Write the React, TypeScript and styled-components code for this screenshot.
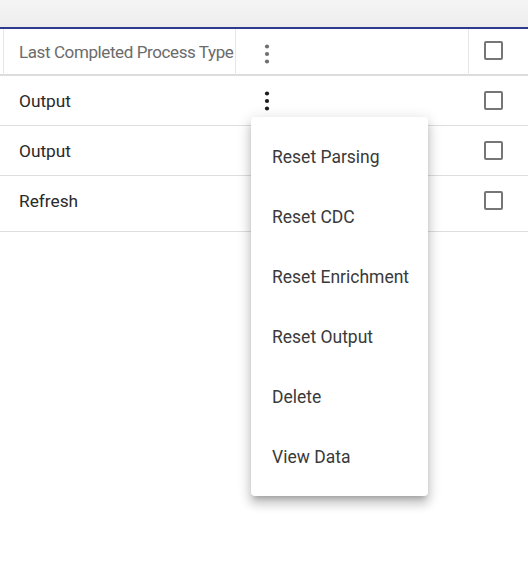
import React from "react";
import styled, { createGlobalStyle } from "styled-components";

const GlobalStyle = createGlobalStyle`
  html, body {
    margin: 0;
    padding: 0;
    background: #ffffff;
  }
  body {
    font-family: Roboto, "Liberation Sans", Arial, sans-serif;
  }
`;

const Page = styled.div`
  position: relative;
  width: 528px;
  height: 564px;
  overflow: hidden;
  background: #ffffff;
  font-family: Roboto, "Liberation Sans", Arial, sans-serif;
`;

const TopBar = styled.div`
  height: 27px;
  background: linear-gradient(#f5f5f5, #ededed);
  border-bottom: 2px solid #2d3a8e;
`;

const Table = styled.div`
  display: grid;
  grid-template-columns: 4px 232px 233px 1fr;
`;

const HeaderCell = styled.div<{ $divider?: boolean; $center?: boolean }>`
  box-sizing: border-box;
  height: 47px;
  display: flex;
  align-items: center;
  padding-left: ${(p) => (p.$center ? "0" : "15px")};
  border-right: ${(p) => (p.$divider ? "1px solid #e6e6e6" : "none")};
  border-bottom: 2px solid #dcdcdc;
  color: #6b6b6b;
  font-size: 17px;
  letter-spacing: -0.4px;
  white-space: nowrap;
  overflow: hidden;
`;

const BodyCell = styled.div<{ $last?: boolean }>`
  box-sizing: border-box;
  height: ${(p) => (p.$last ? "56px" : "50px")};
  padding-bottom: ${(p) => (p.$last ? "6px" : "0")};
  display: flex;
  align-items: center;
  padding-left: 15px;
  border-bottom: 1px solid #dedede;
  color: #2a2a2a;
  font-size: 17.3px;
  white-space: nowrap;
`;

const Spacer = styled(BodyCell)`
  padding-left: 0;
`;

const IconCell = styled(BodyCell)`
  padding-left: 19px;
`;

const CheckCell = styled(BodyCell)`
  padding-left: 15px;
`;

const HeaderIconCell = styled(HeaderCell)`
  padding-left: 19px;
  padding-top: 5px;
`;

const HeaderCheckCell = styled(HeaderCell)`
  padding-left: 15px;
  padding-bottom: 2px;
`;

const Box = styled.span`
  display: inline-block;
  width: 19px;
  height: 19px;
  box-sizing: border-box;
  border: 2px solid #767676;
  border-radius: 2px;
  background: #fff;
`;

const Kebab = ({ color }: { color: string }) => (
  <svg width="24" height="24" viewBox="0 0 24 24" aria-hidden="true">
    <circle cx="12" cy="4.5" r="2.1" fill={color} />
    <circle cx="12" cy="12" r="2.1" fill={color} />
    <circle cx="12" cy="19.5" r="2.1" fill={color} />
  </svg>
);

const Menu = styled.div`
  position: absolute;
  left: 251px;
  top: 117px;
  width: 177px;
  box-sizing: border-box;
  padding: 10px 0 9px;
  background: #ffffff;
  border-radius: 4px;
  box-shadow: 0 5px 5px -3px rgba(0, 0, 0, 0.2),
    0 8px 10px 1px rgba(0, 0, 0, 0.14), 0 3px 14px 2px rgba(0, 0, 0, 0.12);
`;

const MenuItem = styled.div`
  height: 60px;
  display: flex;
  align-items: center;
  padding-left: 21px;
  font-size: 17.5px;
  color: #3a3a3a;
  white-space: nowrap;
`;

const rows = ["Output", "Output", "Refresh"];
const menuItems = [
  "Reset Parsing",
  "Reset CDC",
  "Reset Enrichment",
  "Reset Output",
  "Delete",
  "View Data",
];

export default function App() {
  return (
    <Page>
      <GlobalStyle />
      <TopBar />
      <Table>
        <HeaderCell $divider $center />
        <HeaderCell $divider>Last Completed Process Type</HeaderCell>
        <HeaderIconCell $divider>
          <Kebab color="#707070" />
        </HeaderIconCell>
        <HeaderCheckCell>
          <Box />
        </HeaderCheckCell>
        {rows.map((r, i) => {
          const last = i === rows.length - 1;
          return (
            <React.Fragment key={i}>
              <Spacer $last={last} />
              <BodyCell $last={last}>{r}</BodyCell>
              <IconCell $last={last}>
                <Kebab color="#1c1c1c" />
              </IconCell>
              <CheckCell $last={last}>
                <Box />
              </CheckCell>
            </React.Fragment>
          );
        })}
      </Table>
      <Menu>
        {menuItems.map((m) => (
          <MenuItem key={m}>{m}</MenuItem>
        ))}
      </Menu>
    </Page>
  );
}
